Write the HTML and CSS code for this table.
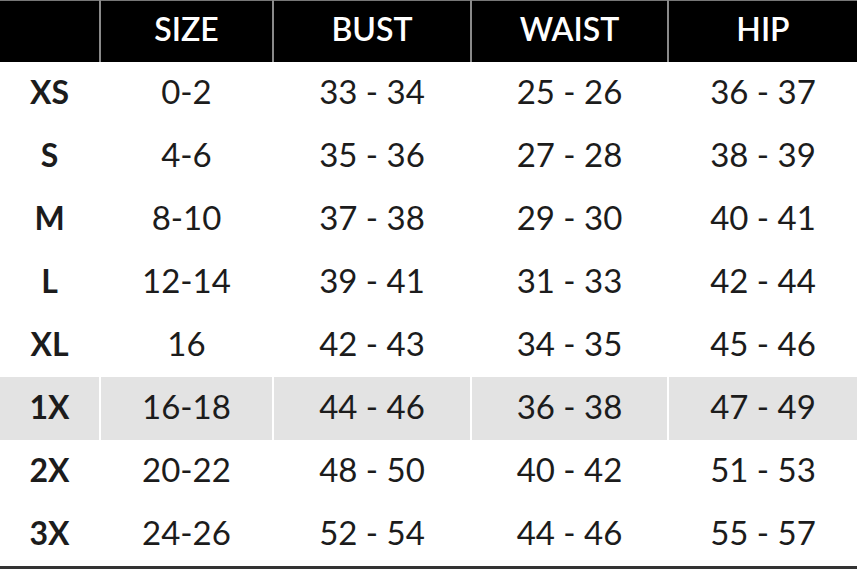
FILE: index.html
```html
<!DOCTYPE html>
<html>
<head>
<meta charset="utf-8">
<link rel="stylesheet" href="styles.css">
</head>
<body>
<table class="chart">
  <colgroup>
    <col class="c0"><col class="c1"><col class="c2"><col class="c3"><col class="c4">
  </colgroup>
  <thead>
    <tr><th></th><th>SIZE</th><th>BUST</th><th>WAIST</th><th>HIP</th></tr>
  </thead>
  <tbody>
    <tr><td class="lbl">XS</td><td>0-2</td><td>33 - 34</td><td>25 - 26</td><td>36 - 37</td></tr>
    <tr><td class="lbl">S</td><td>4-6</td><td>35 - 36</td><td>27 - 28</td><td>38 - 39</td></tr>
    <tr><td class="lbl">M</td><td>8-10</td><td>37 - 38</td><td>29 - 30</td><td>40 - 41</td></tr>
    <tr><td class="lbl">L</td><td>12-14</td><td>39 - 41</td><td>31 - 33</td><td>42 - 44</td></tr>
    <tr><td class="lbl">XL</td><td>16</td><td>42 - 43</td><td>34 - 35</td><td>45 - 46</td></tr>
    <tr class="hl"><td class="lbl">1X</td><td>16-18</td><td>44 - 46</td><td>36 - 38</td><td>47 - 49</td></tr>
    <tr><td class="lbl">2X</td><td>20-22</td><td>48 - 50</td><td>40 - 42</td><td>51 - 53</td></tr>
    <tr><td class="lbl">3X</td><td>24-26</td><td>52 - 54</td><td>44 - 46</td><td>55 - 57</td></tr>
  </tbody>
</table>
</body>
</html>
```
FILE: styles.css
```css
html, body {
  margin: 0;
  padding: 0;
  background: #fff;
}
.chart {
  width: 857px;
  border-collapse: collapse;
  table-layout: fixed;
  font-family: Lato, "Noto Sans", sans-serif;
  color: #1c1c1c;
  border-top: 1px solid #777;
  border-bottom: 3px solid #333;
}
.c0 { width: 100px; }
.c1 { width: 173px; }
.c2 { width: 198px; }
.c3 { width: 197px; }
.c4 { width: 189px; }
.chart th {
  background: #000;
  color: #fff;
  height: 54px;
  padding: 0 0 7px;
  font-size: 32px;
  font-weight: 600;
  text-align: center;
  vertical-align: middle;
  border-left: 2px solid #8a8a8a;
}
.chart th:first-child { border-left: none; }
.chart td {
  height: 58px;
  padding: 0 0 5px;
  font-size: 33px;
  font-weight: 400;
  text-align: center;
  vertical-align: middle;
  border-left: 2px solid #fff;
}
.chart td:first-child { border-left: none; }
.chart td.lbl {
  font-weight: 700;
  font-size: 32px;
}
.chart tr.hl td {
  background: #e3e3e3;
}
```
